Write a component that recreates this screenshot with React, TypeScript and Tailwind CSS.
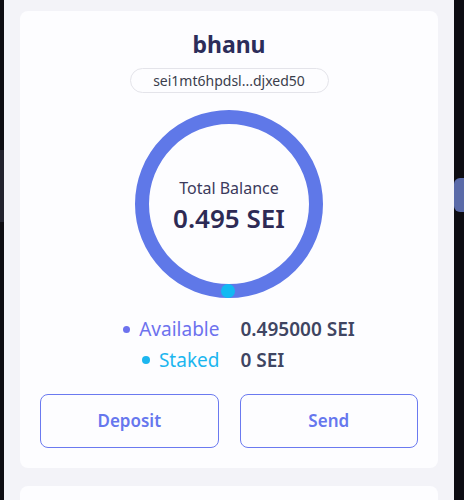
import React from "react";

const font = { fontFamily: '"Noto Sans", "Open Sans", sans-serif' };

const BalanceRing = () => (
  <div className="relative w-[190px] h-[190px]">
    <svg width="190" height="190" viewBox="0 0 190 190" className="absolute inset-0">
      <circle cx="95" cy="95" r="87" fill="none" stroke="#5f78e8" strokeWidth="14" />
      <circle cx="94" cy="182" r="7" fill="#12b9f2" />
    </svg>
    <div className="absolute inset-0 flex flex-col items-center justify-center pt-[2px]">
      <span className="text-[16px] text-[#3b3a5c] leading-none">Total Balance</span>
      <span className="mt-[9px] text-[26px] font-semibold text-[#2d2a55] leading-none">0.495 SEI</span>
    </div>
  </div>
);

export default function App() {
  return (
    <div className="w-[464px] h-[500px] bg-[#0d0c12] flex overflow-hidden" style={font}>
      <div className="w-[4px] shrink-0 flex flex-col">
        <div className="h-[150px]" />
        <div className="h-[72px] bg-[#22222e]" />
      </div>
      <div className="w-[450px] shrink-0 bg-[#f3f3f8] px-[16px] pt-[11px] flex flex-col gap-[18px]">
        <div className="bg-[#fdfdff] rounded-[8px] h-[457px] shrink-0 flex flex-col items-center pt-[22px]">
          <h1 className="text-[23px] font-bold text-[#2c2d5a] leading-none">bhanu</h1>
          <div className="mt-[12px] w-[199px] h-[25px] rounded-full border border-[#e4e4ea] flex items-center justify-center text-[14px] text-[#3b3d4c]">
            sei1mt6hpdsl...djxed50
          </div>
          <div className="mt-[16px]">
            <BalanceRing />
          </div>
          <div className="mt-[18px] grid grid-cols-[auto_auto] gap-x-[21px] gap-y-[7px] items-center text-[19px] leading-[24px] self-center pl-[20px]">
            <div className="flex items-center justify-end gap-[9px] text-[#6d72ee]">
              <span className="w-[7px] h-[7px] rounded-full bg-[#6d72ee]" />
              Available
            </div>
            <div className="font-semibold text-[#3f4562]">0.495000 SEI</div>
            <div className="flex items-center justify-end gap-[9px] text-[#1cb6ef]">
              <span className="w-[8px] h-[8px] rounded-full bg-[#1cb6ef]" />
              Staked
            </div>
            <div className="font-semibold text-[#3f4562]">0 SEI</div>
          </div>
          <div className="mt-[22px] w-full px-[20px] grid grid-cols-2 gap-[21px]">
            <button className="h-[54px] rounded-[8px] border border-[#6b7af0] text-[17px] font-semibold text-[#6677ee]">
              Deposit
            </button>
            <button className="h-[54px] rounded-[8px] border border-[#6b7af0] text-[17px] font-semibold text-[#6677ee]">
              Send
            </button>
          </div>
        </div>
        <div className="bg-[#fdfdff] rounded-[8px] h-[100px] shrink-0" />
      </div>
      <div className="flex-1 flex flex-col">
        <div className="h-[28px]" />
        <div className="h-[34px] mt-[150px] bg-[#5a6aa8] rounded-l-[6px]" />
      </div>
    </div>
  );
}
